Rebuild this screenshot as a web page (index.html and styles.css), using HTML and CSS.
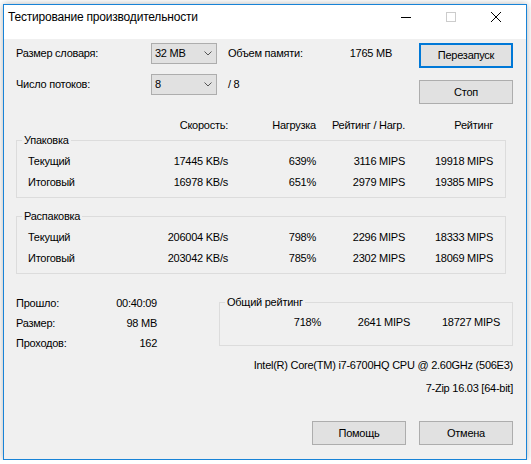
FILE: index.html
```html
<!DOCTYPE html>
<html lang="ru">
<head>
<meta charset="utf-8">
<title>Тестирование производительности</title>
<link rel="stylesheet" href="styles.css">
</head>
<body>
<div class="window">
  <div class="titlebar">
    <span class="title">Тестирование производительности</span>
    <div class="caps">
      <span class="cap"><svg width="10" height="10" viewBox="0 0 10 10"><path d="M0 5.5H10" stroke="#000" stroke-width="1"/></svg></span>
      <span class="cap"><svg width="10" height="10" viewBox="0 0 10 10"><rect x="0.5" y="0.5" width="9" height="9" fill="none" stroke="#cccccc"/></svg></span>
      <span class="cap"><svg width="10" height="10" viewBox="0 0 10 10"><path d="M0 0L10 10M10 0L0 10" stroke="#000" stroke-width="1"/></svg></span>
    </div>
  </div>
  <div class="client">
    <div class="top">
      <div class="settings">
        <span>Размер словаря:</span>
        <div class="combo"><span>32 MB</span><svg width="8" height="5" viewBox="0 0 8 5"><path d="M0.5 0.5L4 4L7.5 0.5" fill="none" stroke="#555"/></svg></div>
        <div class="mem"><span>Объем памяти:</span><span>1765 MB</span></div>
        <span>Число потоков:</span>
        <div class="combo"><span>8</span><svg width="8" height="5" viewBox="0 0 8 5"><path d="M0.5 0.5L4 4L7.5 0.5" fill="none" stroke="#555"/></svg></div>
        <div class="mem"><span>/ 8</span></div>
      </div>
      <div class="actions">
        <button class="btn default">Перезапуск</button>
        <button class="btn">Стоп</button>
      </div>
    </div>

    <div class="cols header">
      <span class="name"></span><span>Скорость:</span><span>Нагрузка</span><span>Рейтинг / Нагр.</span><span>Рейтинг</span>
    </div>

    <fieldset class="group">
      <legend>Упаковка</legend>
      <div class="cols rows">
        <span class="name">Текущий</span><span>17445 KB/s</span><span>639%</span><span>3116 MIPS</span><span>19918 MIPS</span>
        <span class="name">Итоговый</span><span>16978 KB/s</span><span>651%</span><span>2979 MIPS</span><span>19385 MIPS</span>
      </div>
    </fieldset>

    <fieldset class="group second">
      <legend>Распаковка</legend>
      <div class="cols rows">
        <span class="name">Текущий</span><span>206004 KB/s</span><span>798%</span><span>2296 MIPS</span><span>18333 MIPS</span>
        <span class="name">Итоговый</span><span>203042 KB/s</span><span>785%</span><span>2302 MIPS</span><span>18069 MIPS</span>
      </div>
    </fieldset>

    <div class="bottom">
      <div class="stats">
        <span>Прошло:</span><span>00:40:09</span>
        <span>Размер:</span><span>98 MB</span>
        <span>Проходов:</span><span>162</span>
      </div>
      <fieldset class="total">
        <legend>Общий рейтинг</legend>
        <div class="total-row">
          <span>718%</span><span>2641 MIPS</span><span>18727 MIPS</span>
        </div>
      </fieldset>
    </div>

    <div class="info cpu">Intel(R) Core(TM) i7-6700HQ CPU @ 2.60GHz (506E3)</div>
    <div class="info ver">7-Zip 16.03 [64-bit]</div>

    <div class="footer">
      <button class="btn">Помощь</button>
      <button class="btn">Отмена</button>
    </div>
  </div>
</div>
</body>
</html>
```

FILE: styles.css
```css
* { box-sizing: border-box; }
html, body { margin: 0; padding: 0; }
body {
  background: #ffffff;
  font-family: "Liberation Sans", Arial, sans-serif;
  font-size: 11px;
  line-height: 13px;
  letter-spacing: -0.25px;
  color: #000;
}
.window {
  width: 524px;
  height: 456px;
  margin: 4px 0 0 3px;
  border: 1px solid #1883d7;
  background: #f0f0f0;
  box-shadow: 0 0 7px rgba(0, 0, 0, 0.3);
  display: flex;
  flex-direction: column;
}
.titlebar {
  height: 34px;
  flex: none;
  background: #fff;
  display: flex;
  align-items: flex-start;
  padding: 0 8px 0 4px;
}
.title {
  flex: 1;
  font-family: "Liberation Sans", Arial, sans-serif;
  font-size: 12px;
  letter-spacing: -0.2px;
  line-height: 24px;
}
.caps { display: flex; }
.cap {
  width: 45px;
  height: 24px;
  display: flex;
  align-items: center;
  justify-content: center;
}
.client {
  flex: 1;
  display: flex;
  flex-direction: column;
  padding: 4px 13px 14px 12px;
}
.top { display: flex; }
.settings {
  display: grid;
  grid-template-columns: 135px 66px 175px;
  grid-auto-rows: 21px;
  row-gap: 10px;
  align-items: center;
}
.combo {
  height: 21px;
  border: 1px solid #adadad;
  background: #e1e1e1;
  display: flex;
  align-items: center;
  justify-content: space-between;
  padding: 0 4px 0 3px;
}
.mem {
  padding-left: 11px;
  display: flex;
  justify-content: space-between;
}
.actions {
  margin-left: 27px;
  display: flex;
  flex-direction: column;
  gap: 12px;
}
.btn {
  width: 94px;
  height: 24px;
  border: 1px solid #adadad;
  background: #e1e1e1;
  font: inherit;
  letter-spacing: inherit;
  color: #000;
  padding: 0;
}
.btn.default {
  height: 25px;
  border: 2px solid #0078d7;
}
.cols {
  display: grid;
  grid-template-columns: 100px 100px 88px 89px 88px;
  text-align: right;
}
.cols > .name { text-align: left; }
.header { margin: 15px 0 0 12px; }
.group {
  margin: 2px 7px 0 0;
  border: 1px solid #dcdcdc;
  padding: 4px 0 4px 0;
  min-width: 0;
}
.group.second { margin-top: 12px; }
legend {
  padding: 0 2px;
  margin-left: 5px;
  line-height: 13px;
}
.rows {
  padding-left: 11px;
  grid-auto-rows: 21px;
  align-items: center;
}
.bottom {
  display: flex;
  justify-content: space-between;
  align-items: flex-start;
  margin-top: 19px;
}
.stats {
  width: 141px;
  display: grid;
  grid-template-columns: 1fr auto;
  grid-auto-rows: 20px;
  align-items: center;
}
.stats > span:nth-child(even) { text-align: right; }
.total {
  width: 294px;
  margin: 3px 0 0 0;
  border: 1px solid #dcdcdc;
  padding: 3px 0 12px 0;
  min-width: 0;
}
.total-row {
  display: grid;
  grid-template-columns: 101px 89px 90px;
  height: 21px;
  align-items: center;
}
.total-row > span { text-align: right; }
.info { text-align: right; }
.cpu { margin-top: 6px; }
.ver { margin-top: 10px; }
.footer {
  margin-top: auto;
  display: flex;
  justify-content: flex-end;
  gap: 13px;
}
```
